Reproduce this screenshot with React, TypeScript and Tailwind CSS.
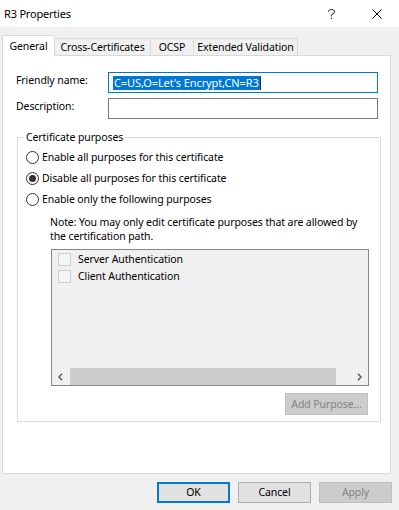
import React from "react";

function Radio({ checked, label }: { checked?: boolean; label: string }) {
  return (
    <div className="h-[21px] flex items-center">
      <div className="w-[13px] h-[13px] rounded-full border border-[#333333] bg-white flex items-center justify-center shrink-0">
        {checked && <div className="w-[7px] h-[7px] rounded-full bg-[#333333]" />}
      </div>
      <span className="ml-[3px] whitespace-nowrap">{label}</span>
    </div>
  );
}

function Check({ label }: { label: string }) {
  return (
    <div className="h-[17px] flex items-center">
      <div className="w-[13px] h-[13px] border border-[#cccccc] bg-[#f4f4f4] shrink-0" />
      <span className="ml-[7px] whitespace-nowrap">{label}</span>
    </div>
  );
}

function Chevron({ dir }: { dir: "l" | "r" }) {
  return (
    <svg width="5" height="8" viewBox="0 0 5 8">
      <path
        d={dir === "l" ? "M4 0.8 L1 4 L4 7.2" : "M1 0.8 L4 4 L1 7.2"}
        fill="none"
        stroke="#606060"
        strokeWidth="1.5"
      />
    </svg>
  );
}

export default function App() {
  return (
    <div className="w-[399px] h-[510px] bg-[#f0f0f0] flex flex-col overflow-hidden text-[10.5px] tracking-[-0.1px] leading-[15px] text-black [font-family:'Noto_Sans',sans-serif]">
      {/* title bar */}
      <div className="h-[27px] bg-white flex items-center shrink-0">
        <span className="pl-[4px] whitespace-nowrap text-[11px] tracking-[-0.2px]">R3 Properties</span>
        <svg className="ml-auto" width="7" height="10" viewBox="0 0 7 10">
          <path
            d="M0.6 2.6 C0.6 1.2 1.8 0.5 3.4 0.5 C5.1 0.5 6.4 1.3 6.4 2.8 C6.4 4.2 5.1 4.7 4 5.4 C3.5 5.7 3.4 6.1 3.4 6.6 L3.4 7.4"
            fill="none"
            stroke="#000"
            strokeWidth="1"
          />
          <rect x="2.9" y="8.8" width="1.1" height="1.1" fill="#000" />
        </svg>
        <svg className="ml-[37px] mr-[17px]" width="10" height="10" viewBox="0 0 10 10">
          <path d="M0.5 0.5 L9.5 9.5 M9.5 0.5 L0.5 9.5" stroke="#000" strokeWidth="1" />
        </svg>
      </div>

      {/* tabs */}
      <div className="h-[20px] mt-[8px] flex items-end pl-[2px] shrink-0">
        <div className="relative z-10 h-[21px] -mb-[1px] w-[53px] bg-white border-l border-t border-r border-[#d9d9d9] flex items-center justify-center whitespace-nowrap">
          General
        </div>
        <div className="h-[17px] w-[96px] border-t border-r border-[#d9d9d9] flex items-center justify-center whitespace-nowrap">
          Cross-Certificates
        </div>
        <div className="h-[17px] w-[43px] border-t border-r border-[#d9d9d9] flex items-center justify-center whitespace-nowrap">
          OCSP
        </div>
        <div className="h-[17px] w-[104px] border-t border-r border-[#d9d9d9] flex items-center justify-center whitespace-nowrap">
          Extended Validation
        </div>
      </div>

      {/* panel */}
      <div className="ml-[2px] w-[389px] h-[419px] bg-white border border-[#d9d9d9] flex flex-col shrink-0">
        <div className="mt-[16px] ml-[13px] flex">
          <div className="w-[92px] pt-[1px] whitespace-nowrap">Friendly name:</div>
          <div className="w-[270px] h-[21px] border border-[#0078d7] flex items-center pl-[4px]">
            <span className="inline-block h-[14px] leading-[14px] px-[1px] bg-[#0078d7] text-white whitespace-nowrap text-[11px] tracking-[-0.1px]">
              C=US,O=Let&apos;s Encrypt,CN=R3
            </span>
            <span className="w-[1px] h-[14px] bg-[#333333]" />
          </div>
        </div>
        <div className="mt-[5px] ml-[13px] flex">
          <div className="w-[92px] pt-[1px] whitespace-nowrap">Description:</div>
          <div className="w-[270px] h-[21px] border border-[#7a7a7a]" />
        </div>

        <fieldset className="mt-[11px] ml-[14px] w-[364px] border border-[#dcdcdc] pb-[6px]">
          <legend className="ml-[6px] px-[2px] leading-[15px] whitespace-nowrap">Certificate purposes</legend>
          <div className="pt-[2px] pl-[8px]">
            <Radio label="Enable all purposes for this certificate" />
            <Radio checked label="Disable all purposes for this certificate" />
            <Radio label="Enable only the following purposes" />
          </div>
          <div className="mt-[5px] pl-[32px] leading-[14px] whitespace-nowrap">
            Note: You may only edit certificate purposes that are allowed by
            <br />
            the certification path.
          </div>
          <div className="mt-[6px] ml-[33px] w-[318px] h-[137px] border border-[#828790] bg-[#f0f0f0] flex flex-col">
            <div className="flex-1 pt-[1px] pl-[6px]">
              <Check label="Server Authentication" />
              <Check label="Client Authentication" />
            </div>
            <div className="h-[17px] flex items-stretch shrink-0">
              <div className="w-[17px] flex items-center justify-center">
                <Chevron dir="l" />
              </div>
              <div className="ml-[1px] w-[266px] bg-[#cdcdcd]" />
              <div className="flex-1" />
              <div className="w-[17px] flex items-center justify-center">
                <Chevron dir="r" />
              </div>
            </div>
          </div>
          <div className="mt-[7px] ml-[267px] w-[83px] h-[22px] bg-[#cccccc] border border-[#bfbfbf] text-[#838383] flex items-center justify-center whitespace-nowrap">
            Add Purpose...
          </div>
        </fieldset>
      </div>

      {/* bottom buttons */}
      <div className="mt-[8px] flex justify-end gap-[8px] pr-[7px] shrink-0">
        <div className="w-[73px] h-[21px] border-2 border-[#0078d7] bg-[#e1e1e1] flex items-center justify-center">
          OK
        </div>
        <div className="w-[73px] h-[21px] border border-[#adadad] bg-[#e1e1e1] flex items-center justify-center">
          Cancel
        </div>
        <div className="w-[73px] h-[21px] border border-[#bfbfbf] bg-[#cccccc] text-[#838383] flex items-center justify-center">
          Apply
        </div>
      </div>
    </div>
  );
}
